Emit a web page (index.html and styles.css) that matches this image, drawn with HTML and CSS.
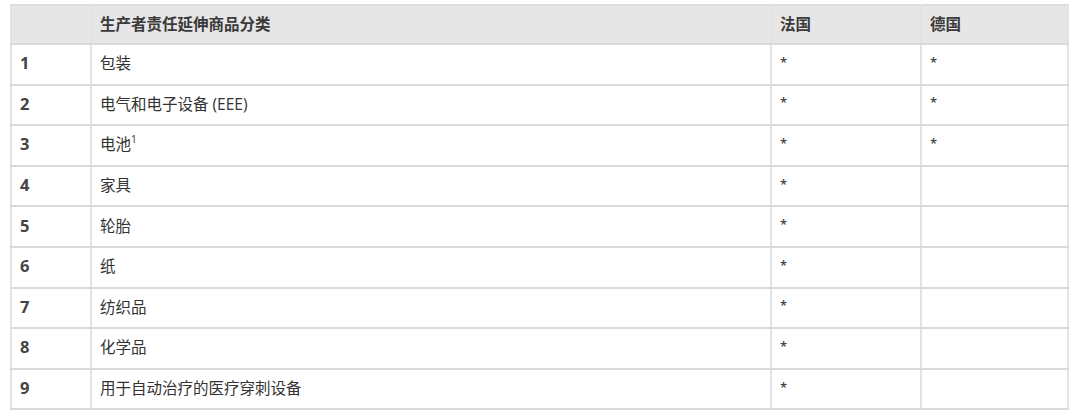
FILE: index.html
```html
<!DOCTYPE html>
<html lang="zh">
<head>
<meta charset="utf-8">
<link rel="stylesheet" href="styles.css">
</head>
<body>
<table class="epr">
  <colgroup>
    <col class="c-num">
    <col class="c-cat">
    <col class="c-fr">
    <col class="c-de">
  </colgroup>
  <thead>
    <tr>
      <th></th>
      <th>生产者责任延伸商品分类</th>
      <th>法国</th>
      <th>德国</th>
    </tr>
  </thead>
  <tbody>
    <tr><td class="num">1</td><td>包装</td><td class="mark">*</td><td class="mark">*</td></tr>
    <tr><td class="num">2</td><td>电气和电子设备 (EEE)</td><td class="mark">*</td><td class="mark">*</td></tr>
    <tr><td class="num">3</td><td>电池<sup>1</sup></td><td class="mark">*</td><td class="mark">*</td></tr>
    <tr><td class="num">4</td><td>家具</td><td class="mark">*</td><td class="mark"></td></tr>
    <tr><td class="num">5</td><td>轮胎</td><td class="mark">*</td><td class="mark"></td></tr>
    <tr><td class="num">6</td><td>纸</td><td class="mark">*</td><td class="mark"></td></tr>
    <tr><td class="num">7</td><td>纺织品</td><td class="mark">*</td><td class="mark"></td></tr>
    <tr><td class="num">8</td><td>化学品</td><td class="mark">*</td><td class="mark"></td></tr>
    <tr><td class="num">9</td><td>用于自动治疗的医疗穿刺设备</td><td class="mark">*</td><td class="mark"></td></tr>
  </tbody>
</table>
</body>
</html>
```
FILE: styles.css
```css
html, body {
  margin: 0;
  padding: 0;
  background: #ffffff;
}

body {
  padding: 4px 0 0 10px;
  font-family: "Open Sans", "Noto Sans CJK SC", sans-serif;
  color: #333333;
}

.epr {
  border-collapse: collapse;
  width: 1057px;
  table-layout: fixed;
  border: 2px solid #e2e2e2;
}

.c-num { width: 80px; }
.c-cat { width: 680px; }
.c-fr { width: 150px; }
.c-de { width: 147px; }

.epr th,
.epr td {
  border-left: 2px solid #e3e3e3;
  border-right: 2px solid #e3e3e3;
  border-bottom: 2px solid #d9d9d9;
  padding: 0 8px;
  text-align: left;
  vertical-align: middle;
}

.epr thead tr {
  height: 39px;
  background: #e6e6e6;
}

.epr th {
  font-size: 15.5px;
  font-weight: 700;
  color: #3a3a3a;
  border-top: 2px solid #dcdcdc;
  padding-bottom: 2px;
}

.epr tbody tr {
  height: 40.6px;
}

.epr td {
  font-size: 15.5px;
  color: #333333;
  padding-bottom: 3px;
}

.epr td.num {
  font-weight: 700;
  font-size: 16.5px;
  color: #444444;
}

.epr td.mark {
  font-size: 13px;
  font-weight: 600;
  color: #444444;
  padding-bottom: 5px;
}

.epr sup {
  font-size: 10px;
  line-height: 0;
  vertical-align: 7px;
}
```
